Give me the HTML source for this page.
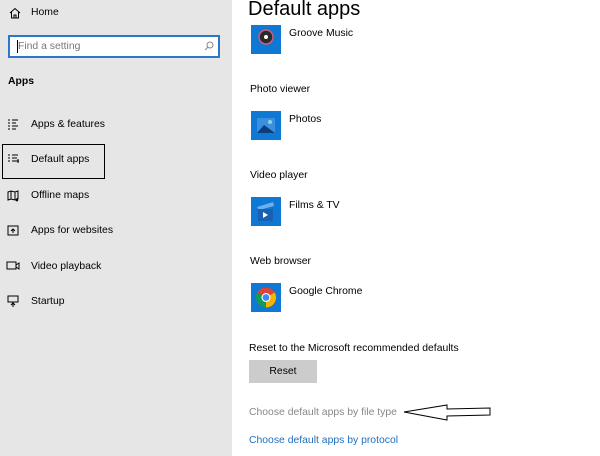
<!DOCTYPE html>
<html><head><style>
*{margin:0;padding:0;box-sizing:border-box}
body{width:600px;height:456px;overflow:hidden;background:#fff;font-family:"Liberation Sans",sans-serif;font-size:10.4px;color:#000;position:relative}
.side{position:absolute;left:0;top:0;width:232px;height:456px;background:#e6e6e6}
.a{position:absolute;white-space:nowrap}
.ic{position:absolute;width:30px;height:29px;background:#0f78d4}
</style></head><body>
<div class="side"></div>
<svg class="a" style="left:9px;top:7px" width="12" height="12" viewBox="0 0 12 12"><path d="M1 6 L6 1.5 L11 6 M2.5 5 V11 H9.5 V5 M5 11 V8 H7 V11" fill="none" stroke="#000" stroke-width="1"/></svg>
<div class="a" style="left:31px;top:7px">Home</div>
<div class="a" style="left:8px;top:35px;width:212px;height:23px;border:2px solid #2b78c8;background:#fff"></div>
<div class="a" style="left:17px;top:40px;width:1px;height:13px;background:#000"></div>
<div class="a" style="left:18px;top:41px;color:#777">Find a setting</div>
<svg class="a" style="left:204px;top:41px" width="10" height="10"><circle cx="6" cy="4" r="3" fill="none" stroke="#888"/><path d="M4 6 L1 9" stroke="#888"/></svg>
<div class="a" style="left:8px;top:76px;font-weight:bold">Apps</div>
<svg class="a" style="left:7px;top:118px" width="12" height="12"><path d="M1 2h2M1 5h2M1 8h2M1 11h2M5 2h6M5 5h4M5 8h6M5 11h4" stroke="#000"/></svg>
<div class="a" style="left:31px;top:119px">Apps &amp; features</div>
<div class="a" style="left:2px;top:144px;width:103px;height:35px;border:1px solid #000"></div>
<svg class="a" style="left:7px;top:154px" width="13" height="11"><path d="M1 1h2M1 4h2M1 7h2M5 1h6M5 4h5M5 7h4M9 7h3M11 5v4" stroke="#000"/></svg>
<div class="a" style="left:31px;top:154px">Default apps</div>
<svg class="a" style="left:7px;top:190px" width="13" height="12"><path d="M1 2v8l3-1 4 1 3-1V1L8 2 4 1z M4 1v8M8 2v8M10 8v3M9 10l1 1 1-1" fill="none" stroke="#000"/></svg>
<div class="a" style="left:31px;top:190px">Offline maps</div>
<svg class="a" style="left:7px;top:225px" width="12" height="11"><rect x="1" y="1" width="10" height="9" fill="none" stroke="#000"/><path d="M6 8V4M4 6l2-2 2 2" fill="none" stroke="#000"/></svg>
<div class="a" style="left:31px;top:225px">Apps for websites</div>
<svg class="a" style="left:6px;top:261px" width="14" height="10"><rect x="1" y="1" width="9" height="7" fill="none" stroke="#000"/><path d="M10 4l3-2v6l-3-2" fill="none" stroke="#000"/></svg>
<div class="a" style="left:31px;top:261px">Video playback</div>
<svg class="a" style="left:7px;top:295px" width="12" height="12"><rect x="1" y="1" width="10" height="6" fill="none" stroke="#000"/><path d="M6 7v5M4 10l2-2 2 2" fill="none" stroke="#000"/></svg>
<div class="a" style="left:31px;top:296px">Startup</div>

<div class="a" style="left:248px;top:-2px;font-size:20px;color:#000">Default apps</div>
<div class="ic" style="left:251px;top:25px;height:29px"></div>
<svg class="a" style="left:251px;top:25px" width="30" height="29"><circle cx="15" cy="12" r="7" fill="#2a2a2a" stroke="#d45a7a" stroke-width="1.5"/><circle cx="15" cy="12" r="2" fill="#fff"/></svg>
<div class="a" style="left:289px;top:28px">Groove Music</div>
<div class="a" style="left:250px;top:84px">Photo viewer</div>
<div class="ic" style="left:251px;top:111px"></div>
<svg class="a" style="left:251px;top:111px" width="30" height="29"><rect x="6" y="7" width="18" height="15" fill="#3b8fe0"/><path d="M6 22 L13 14 L24 22z" fill="#0a3d7a"/><circle cx="19" cy="11" r="2" fill="#9cd"/></svg>
<div class="a" style="left:289px;top:114px">Photos</div>
<div class="a" style="left:250px;top:170px">Video player</div>
<div class="ic" style="left:251px;top:197px"></div>
<svg class="a" style="left:251px;top:197px" width="30" height="29"><path d="M6 10 L22 5 L23 9 L8 13z" fill="#6ab0f0"/><rect x="7" y="12" width="15" height="12" fill="#1a5fb0"/><path d="M12 15v6l5-3z" fill="#fff"/></svg>
<div class="a" style="left:289px;top:200px">Films &amp; TV</div>
<div class="a" style="left:250px;top:256px">Web browser</div>
<div class="ic" style="left:251px;top:283px"></div>
<svg class="a" style="left:251px;top:283px" width="30" height="29" viewBox="0 0 30 29"><circle cx="15" cy="14.5" r="10" fill="#db4437"/><path d="M15 14.5 L6.3 9.5 A10 10 0 0 0 15 24.5z" fill="#0f9d58"/><path d="M15 14.5 L15 24.5 A10 10 0 0 0 23.7 9.5z" fill="#f4b400"/><circle cx="15" cy="14.5" r="4.5" fill="#fff"/><circle cx="15" cy="14.5" r="3.4" fill="#4285f4"/></svg>
<div class="a" style="left:289px;top:286px">Google Chrome</div>
<div class="a" style="left:249px;top:343px">Reset to the Microsoft recommended defaults</div>
<div class="a" style="left:249px;top:360px;width:68px;height:23px;background:#cccccc;text-align:center;line-height:24px">Reset</div>
<div class="a" style="left:249px;top:407px;color:#888">Choose default apps by file type</div>
<svg class="a" style="left:400px;top:402px" width="95" height="22"><path d="M4 10 L47 3 L47 7 L90 6 L90 13 L47 14 L47 18 Z" fill="#fff" stroke="#000" stroke-width="1"/></svg>
<div class="a" style="left:249px;top:435px;color:#1f6fc0">Choose default apps by protocol</div>
</body></html>
